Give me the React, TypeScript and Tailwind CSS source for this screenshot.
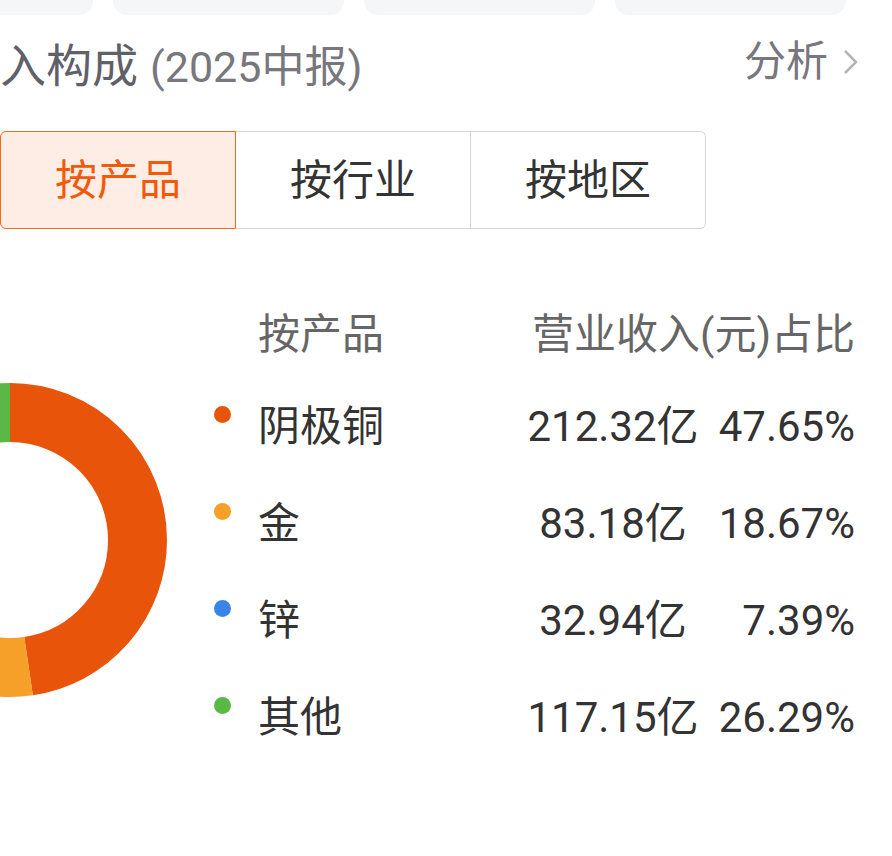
import React from "react";

const tabs = ["按产品", "按行业", "按地区"];

const rows = [
    { name: "阴极铜", value: "212.32亿", pct: "47.65%", color: "#e8550a" },
    { name: "金", value: "83.18亿", pct: "18.67%", color: "#f6a02a" },
    { name: "锌", value: "32.94亿", pct: "7.39%", color: "#3a84e6" },
    { name: "其他", value: "117.15亿", pct: "26.29%", color: "#5ab946" },
];

const Donut = () => {
    const r = 127.5;
    const c = 2 * Math.PI * r;
    let offset = 0;
    return (
        <svg width="314" height="314" viewBox="0 0 314 314" className="shrink-0">
            <g transform="rotate(-90 157 157)">
                {rows.map((row) => {
                    const len = (parseFloat(row.pct) / 100) * c;
                    const el = (
                        <circle
                            key={row.name}
                            cx="157"
                            cy="157"
                            r={r}
                            fill="none"
                            stroke={row.color}
                            strokeWidth="59"
                            strokeDasharray={`${len} ${c - len}`}
                            strokeDashoffset={-offset}
                        />
                    );
                    offset += len;
                    return el;
                })}
            </g>
        </svg>
    );
};

const App = () => {
    return (
        <div
            className="w-[892px] h-[856px] overflow-hidden bg-white"
            style={{ fontFamily: "Roboto, 'Noto Sans CJK SC', sans-serif" }}
        >
            {/* top cards, cut off */}
            <div className="flex gap-[20px] ml-[-138px] h-[15px]">
                {[0, 1, 2, 3].map((i) => (
                    <div key={i} className="w-[231px] h-full shrink-0 bg-[#f5f6f8] rounded-b-[14px]" />
                ))}
            </div>

            {/* title */}
            <div className="flex items-center justify-between h-[96px] pr-[30px]">
                <div className="mt-[6px] whitespace-nowrap leading-none">
                    <span className="text-[46px] text-[#606168]">入构成</span>
                    <span className="text-[43px] text-[#77777d] ml-[12px]">(2025中报)</span>
                </div>
                <div className="flex items-center mb-[2px] text-[42px] leading-none text-[#77777d]">
                    <span>分析</span>
                    <svg width="22" height="30" viewBox="0 0 22 30" className="ml-[12px]">
                        <path d="M5 4 L16 15 L5 26" fill="none" stroke="#b3b3b8" strokeWidth="2.5" />
                    </svg>
                </div>
            </div>

            {/* tabs */}
            <div className="flex mt-[20px] w-[706px] h-[98px]">
                {tabs.map((t, i) => (
                    <div
                        key={t}
                        className={
                            i === 0
                                ? "flex-1 flex items-center justify-center border-[1.5px] border-[#f06a1c] bg-[#fdede4] rounded-l-[6px] text-[#f05a0a] text-[42px]"
                                : i === 2
                                  ? "flex-1 flex items-center justify-center border-y-[1.5px] border-r-[1.5px] border-[#d4d4d4] rounded-r-[6px] text-[#333333] text-[42px]"
                                  : "flex-1 flex items-center justify-center border-y-[1.5px] border-r-[1.5px] border-[#d4d4d4] text-[#333333] text-[42px]"
                        }
                    >
                        {t}
                    </div>
                ))}
            </div>

            {/* chart + legend */}
            <div className="flex mt-[63px]">
                <div className="w-[210px] shrink-0 pt-[91px]">
                    <div className="ml-[-147px]">
                        <Donut />
                    </div>
                </div>
                <div className="flex-1 mr-[37px] text-[42px] leading-none">
                    <div className="flex items-center h-[86px] text-[#666666]">
                        <div className="w-[48px]" />
                        <div className="flex-1">按产品</div>
                        <div className="whitespace-nowrap">营业收入(元)占比</div>
                    </div>
                    {rows.map((row) => (
                        <div key={row.name} className="flex items-center h-[97px] text-[#333333]">
                            <div className="w-[48px] flex">
                                <span
                                    className="ml-[4px] mb-[24px] w-[17px] h-[17px] rounded-full"
                                    style={{ backgroundColor: row.color }}
                                />
                            </div>
                            <div className="flex-1">{row.name}</div>
                            <div className="w-[190px] text-center whitespace-nowrap">{row.value}</div>
                            <div className="w-[147px] text-right whitespace-nowrap">{row.pct}</div>
                        </div>
                    ))}
                </div>
            </div>
        </div>
    );
};

export default App;
